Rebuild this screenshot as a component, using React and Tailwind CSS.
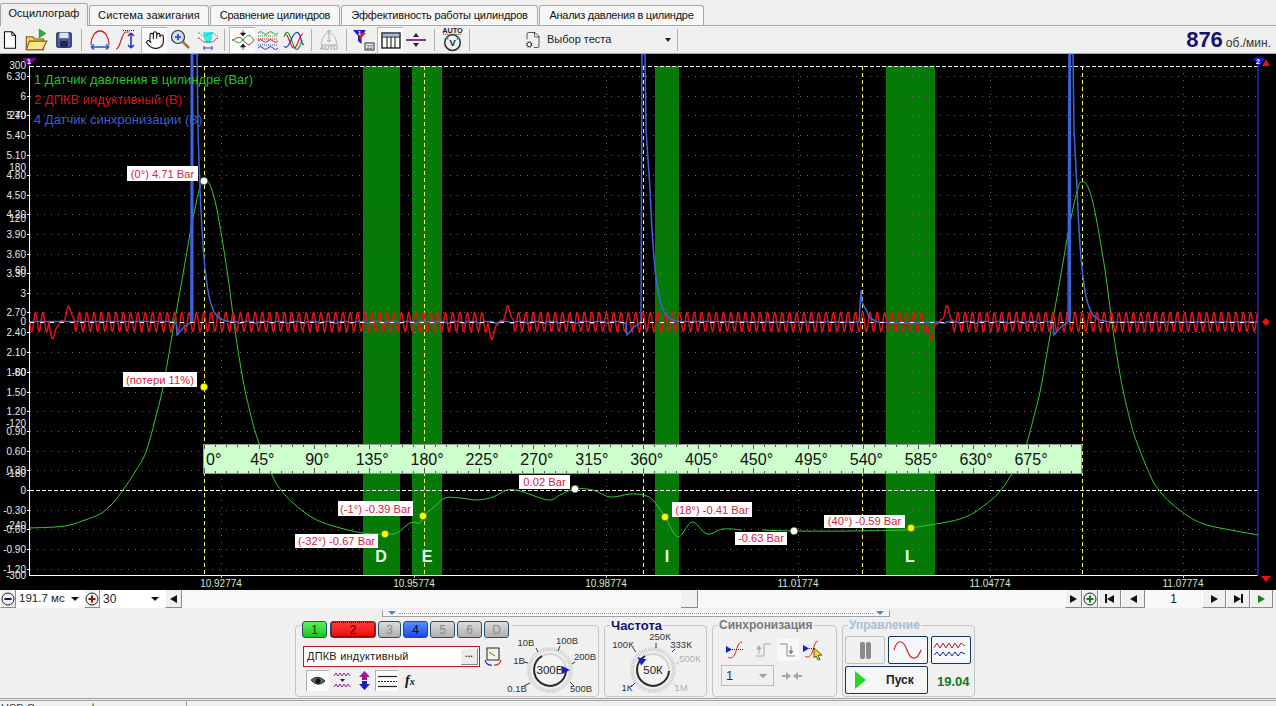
import { FileCog, Hand } from "lucide-react";

const sans = "font-['Liberation_Sans',Arial,sans-serif]";

const tabs = [
  { label: "Осциллограф", width: "w-[88px]", active: true },
  { label: "Система зажигания", width: "w-[120px]", tracking: "tracking-[0.1px]" },
  { label: "Сравнение цилиндров", width: "w-[130px]", tracking: "tracking-[-0.25px]" },
  { label: "Эффективность работы цилиндров", width: "w-[197px]", tracking: "tracking-[-0.17px]" },
  { label: "Анализ давления в цилиндре", width: "w-[165px]", tracking: "tracking-[-0.25px]" },
];

// chart data, in page pixels
const zones = [
  [363, 400],
  [412, 442],
  [655, 679],
  [886, 935],
];
const zoneLetters = [
  ["D", 381],
  ["E", 427],
  ["I", 667],
  ["L", 910],
];
const cursors = [204, 424, 643, 862, 1082];
const timeLabels = [
  ["10.92774", 221],
  ["10.95774", 414],
  ["10.98774", 606],
  ["11.01774", 798],
  ["11.04774", 990],
  ["11.07774", 1183],
];
const pressureLabels = [
  ["6.30", 76], ["6", 96], ["5.70", 115], ["5.40", 135], ["5.10", 155], ["4.80", 175],
  ["4.50", 195], ["4.20", 214], ["3.90", 234], ["3.60", 254], ["3.30", 273], ["3", 293],
  ["2.70", 312], ["2.40", 332], ["2.10", 352], ["1.80", 372], ["1.50", 392], ["1.20", 411],
  ["0.90", 431], ["0.60", 451], ["0.30", 470], ["0", 490], ["-0.30", 510], ["-0.60", 529],
  ["-0.90", 549], ["-1.20", 569],
];
const voltLabels = [
  ["300", 65], ["240", 115], ["180", 167], ["120", 218], ["60", 270], ["0", 321],
  ["-60", 372], ["-120", 423], ["-180", 473], ["-240", 525], ["-300", 575],
];
const gridRows = [76, 96, 115, 135, 155, 175, 195, 214, 234, 254, 273, 293, 312, 332, 352, 372, 392, 411, 431, 451, 470, 510, 529, 549, 569];
const gridCols = [221, 414, 606, 798, 990, 1183];

const pressure = [
  [30, 528], [55, 527], [70, 525], [85, 520], [100, 514], [113, 503], [123, 490], [135, 472], [146, 452], [155, 420],
  [163, 387], [173, 330], [182, 280], [192, 223], [200, 187], [204, 180], [210, 185], [217, 210], [227, 270],
  [235, 330], [243, 380], [252, 420], [259, 443], [273, 477], [281, 490], [293, 503], [313, 518], [333, 526],
  [363, 533], [385, 534], [397, 533], [410, 523], [420, 523], [423, 516], [433, 508], [445, 498], [460, 498],
  [477, 500], [493, 497], [507, 490], [520, 491], [548, 500], [560, 495], [575, 489], [593, 490], [610, 497],
  [630, 494], [643, 495], [653, 500], [665, 517], [678, 537], [692, 522], [707, 534], [723, 529], [742, 530],
  [762, 530], [793, 531], [850, 531], [905, 530], [911, 528], [960, 519], [985, 505], [1001, 490], [1013, 472],
  [1024, 452], [1033, 420], [1041, 387], [1051, 330], [1060, 280], [1070, 223], [1078, 188], [1082, 182],
  [1088, 187], [1095, 212], [1105, 270], [1113, 330], [1121, 380], [1130, 420], [1137, 443], [1151, 477],
  [1159, 490], [1171, 503], [1191, 518], [1211, 526], [1258, 535],
];

// catmull-rom through the points, the trace is a smooth curve in the original
const toPath = (pts) => {
  let d = `M${pts[0][0]} ${pts[0][1]}`;
  for (let i = 0; i < pts.length - 1; i++) {
    const p0 = pts[i - 1] || pts[i];
    const p1 = pts[i];
    const p2 = pts[i + 1];
    const p3 = pts[i + 2] || p2;
    const c1x = p1[0] + (p2[0] - p0[0]) / 6;
    const c1y = p1[1] + (p2[1] - p0[1]) / 6;
    const c2x = p2[0] - (p3[0] - p1[0]) / 6;
    const c2y = p2[1] - (p3[1] - p1[1]) / 6;
    d += `C${c1x.toFixed(1)} ${c1y.toFixed(1)} ${c2x.toFixed(1)} ${c2y.toFixed(1)} ${p2[0]} ${p2[1]}`;
  }
  return d;
};

const makeRed = () => {
  const pts = [];
  for (let x = 30; x <= 1258; x += 0.5) {
    let y = 322 + 9.5 * Math.sin((2 * Math.PI * (x - 30)) / 7.32);
    [53, 492, 931].forEach((b) => {
      if (x > b - 4 && x < b + 22) y = 322 + 1.5 * Math.sin(x);
      y += 16 * Math.exp(-(((x - b) / 3.5) ** 2)) - 15 * Math.exp(-(((x - b - 16) / 3.5) ** 2));
    });
    pts.push(`${x},${y.toFixed(1)}`);
  }
  return pts.join(" ");
};

const makeBlue = () => {
  const pts = [[30, 322]];
  [
    [192, 5],
    [642, 3],
    [1069, 4],
  ].forEach(([x, gap]) => {
    for (let i = pts[pts.length - 1][0] + 4; i < x - 16; i += 4) pts.push([i, 322 + (i % 16 === 0 ? 1.5 : -0.5)]);
    pts.push([x - 16, 323], [x - 15, 335], [x - 8, 327], [x - 1, 322], [x, 54], [x + gap, 54], [x + gap + 1, 130]);
    for (let t = 8; t <= 36; t += 1) pts.push([x + t, 322 - 192 * Math.exp(-(t - 6) / 5.5)]);
    if (x === 642) pts.push([760, 322], [859, 322], [861, 290], [862, 302], [870, 318], [877, 322], [900, 323], [940, 322]);
  });
  pts.push([1110, 322], [1258, 322]);
  return pts.map(([a, b]) => `${a},${b.toFixed(1)}`).join(" ");
};

const callouts = [
  { text: "(0°) 4.71 Bar", x: 127, y: 166, w: 71, h: 15, px: 204, py: 181, color: "#ffffff" },
  { text: "(потери 11%)", x: 123, y: 372, w: 74, h: 15, px: 204, py: 387, color: "#ffff00" },
  { text: "(-1°) -0.39 Bar", x: 338, y: 501, w: 75, h: 15, px: 423, py: 516, color: "#ffff00" },
  { text: "(-32°) -0.67 Bar", x: 295, y: 534, w: 83, h: 14, px: 385, py: 534, color: "#ffff00" },
  { text: "0.02 Bar", x: 519, y: 475, w: 51, h: 14, px: 575, py: 489, color: "#ffffff" },
  { text: "(18°) -0.41 Bar", x: 672, y: 502, w: 80, h: 15, px: 665, py: 517, color: "#ffff00" },
  { text: "-0.63 Bar", x: 735, y: 532, w: 52, h: 13, px: 794, py: 531, color: "#ffffff" },
  { text: "(40°) -0.59 Bar", x: 824, y: 515, w: 81, h: 13, px: 911, py: 528, color: "#ffff00" },
];

const Chart = () => {
  const degTicks = [];
  for (let i = 0; i <= 80; i++) degTicks.push(i);
  return (
    <svg viewBox="0 54 1276 536" className="block w-full h-[536px] bg-black" fontFamily="Liberation Sans, Arial, sans-serif">
      {zones.map(([a, b]) => (
        <rect key={a} x={a} y={66} width={b - a} height={509} fill="#067a06" />
      ))}
      {gridRows.map((y) => (
        <line key={y} x1={30} x2={1258} y1={y + 0.5} y2={y + 0.5} stroke="#6a6a6a" strokeDasharray="1 6" />
      ))}
      {gridCols.map((x) => (
        <line key={x} x1={x + 0.5} x2={x + 0.5} y1={66} y2={575} stroke="#6a6a6a" strokeDasharray="1 6" />
      ))}
      {cursors.map((x) => (
        <line key={x} x1={x + 0.5} x2={x + 0.5} y1={66} y2={575} stroke="#ffff66" strokeDasharray="4 3" />
      ))}
      <line x1={30} x2={1258} y1={66.5} y2={66.5} stroke="#fff" strokeDasharray="4 2" />
      <line x1={30} x2={1258} y1={490.5} y2={490.5} stroke="#fff" strokeDasharray="4 2" />

      {/* axes */}
      <line x1={29.5} x2={29.5} y1={62} y2={576} stroke="#fff" />
      <line x1={29} x2={1258} y1={575.5} y2={575.5} stroke="#fff" />
      <line x1={1258} x2={1258} y1={60} y2={576} stroke="#1a2fb0" strokeWidth={1.5} />
      {voltLabels.map(([t, y]) => (
        <text key={t} x={26} y={y + 3.5} textAnchor="end" fontSize={10} fill="#e8e8e8">{t}</text>
      ))}
      {pressureLabels.map(([t, y]) => (
        <g key={t}>
          <text x={26} y={y + 3.5} textAnchor="end" fontSize={10} fill="#e8e8e8">{t}</text>
          <line x1={27} x2={30} y1={y + 0.5} y2={y + 0.5} stroke="#fff" />
        </g>
      ))}
      {timeLabels.map(([t, x]) => (
        <g key={t}>
          <line x1={x + 0.5} x2={x + 0.5} y1={575} y2={578} stroke="#ccc" />
          <text x={x} y={587} textAnchor="middle" fontSize={10} fill="#d5e6d0">{t}</text>
        </g>
      ))}

      {/* signals */}
      <path d={toPath(pressure.filter((p) => p[0] <= 742))} fill="none" stroke="#35c935" strokeWidth={1} />
      <path d={toPath(pressure.filter((p) => p[0] >= 762))} fill="none" stroke="#35c935" strokeWidth={1} />
      <polyline points={makeRed()} fill="none" stroke="#e01414" strokeWidth={1.5} />
      <polyline points={makeBlue()} fill="none" stroke="#3c64de" strokeWidth={1.5} />
      <line x1={192} x2={192} y1={54} y2={322} stroke="#3c64de" strokeWidth={3} />
      <line x1={1070} x2={1070} y1={54} y2={322} stroke="#3c64de" strokeWidth={2} />
      <line x1={30} x2={1258} y1={322.5} y2={322.5} stroke="#fff" strokeDasharray="4 6" />

      {/* degree ruler */}
      <rect x={203.5} y={444.5} width={878} height={29} fill="#ccffcc" stroke="#999" />
      {degTicks.map((i) => {
        const x = Math.round(204 + (i * 54.9) / 5) + 0.5;
        const big = i % 5 === 0;
        return (
          <g key={i}>
            <line x1={x} x2={x} y1={445} y2={big ? 449 : 447} stroke="#555" />
            <line x1={x} x2={x} y1={big ? 468 : 471} y2={473} stroke="#555" />
          </g>
        );
      })}
      {degTicks.filter((i) => i % 5 === 0 && i < 80).map((i) => {
        const deg = i * 9;
        return i === 0 ? (
          <text key={i} x={206} y={465} fontSize={16} fill="#111">0°</text>
        ) : (
          <text key={i} x={207.5 + (i * 54.9) / 5} y={465} textAnchor="middle" fontSize={16} fill="#111">{deg}°</text>
        );
      })}

      {zoneLetters.map(([t, x]) => (
        <text key={t} x={x} y={562} textAnchor="middle" fontSize={16} fontWeight="bold" fill="#e8ffe8">{t}</text>
      ))}

      {/* callouts */}
      {callouts.map((c) => (
        <g key={c.text}>
          <rect x={c.x} y={c.y} width={c.w} height={c.h} fill="#fff" />
          <text x={c.x + c.w / 2} y={c.y + c.h - 3.5} textAnchor="middle" fontSize={11.2} fill="#d8223a">{c.text}</text>
          <circle cx={c.px} cy={c.py} r={3.7} fill={c.color} stroke="#333" strokeWidth={0.5} />
        </g>
      ))}

      {/* legend */}
      <text x={34} y={84} fontSize={13} fill="#22c322">1 Датчик давления в цилиндре (Bar)</text>
      <text x={34} y={104} fontSize={13} fill="#d81414">2 ДПКВ индуктивный (В)</text>
      <text x={34} y={124} fontSize={13} fill="#3c5fd0">4 Датчик синхронизации (В)</text>

      {/* channel markers */}
      <polygon points="22,58 37,58 29,66" fill="#6a0f8a" />
      <text x={29} y={64} textAnchor="middle" fontSize={7} fontWeight="bold" fill="#fff">1</text>
      <polygon points="1253,58 1265,58 1259,67" fill="#1515d8" />
      <text x={1258} y={64} textAnchor="middle" fontSize={7} fontWeight="bold" fill="#fff">2</text>
      <polygon points="1262,66 1270,66 1266,59" fill="#e01010" />
      <polygon points="1266,318 1270,322 1266,326 1262,322" fill="#f01010" />
      <polygon points="1261,576 1271,576 1266,582" fill="#f01010" />
    </svg>
  );
};

const Tool = ({ pressed, children }) => (
  <div className={`w-[26px] h-[26px] flex items-center justify-center ${pressed ? "bg-[#fbfbfb] border-l border-t border-[#b8b8b8]" : ""}`}>
    {children}
  </div>
);

const Sep = ({ className = "" }) => <div className={`w-px h-[22px] bg-[#b0b0b0] ${className}`} />;

const Ico = ({ children, size = 22, box = 24 }) => (
  <svg width={size} height={size} viewBox={`0 0 ${box} ${box}`} fill="none" fontFamily="Liberation Sans, Arial, sans-serif">
    {children}
  </svg>
);

const Toolbar = () => (
  <div className={`h-[28px] flex items-center border-b border-[#a8a8a8] ${sans}`}>
    <div className="-ml-[3px]" />
    <Tool>
      <Ico><path d="M6 3h8l4 4v14H6z" fill="#fff" stroke="#111" strokeWidth="1.2" /><path d="M14 3v4h4" stroke="#111" /></Ico>
    </Tool>
    <Tool>
      <Ico size={26}>
        <path d="M3 9h6l2 2h8v10H3z" fill="#f3cf5a" stroke="#7a5a10" />
        <path d="M6 13h16l-4 8H3z" fill="#fbe68c" stroke="#7a5a10" />
        <path d="M15 2l6 4-6 4z" fill="#2fae3c" stroke="#17701f" strokeWidth=".6" />
      </Ico>
    </Tool>
    <div className="w-[2px]" />
    <Tool>
      <Ico>
        <rect x="4" y="4" width="16" height="16" rx="1" fill="#4a5a92" stroke="#1d2450" />
        <rect x="7" y="4" width="10" height="6" fill="#dfe3ee" />
        <rect x="8" y="13" width="8" height="7" fill="#20284f" />
      </Ico>
    </Tool>
    <Sep className="ml-[4px] mr-[5px]" />
    <Tool>
      <Ico size={24}>
        <path d="M3 17C3 9 7 3 12 3s9 6 9 14" stroke="#d81c1c" strokeWidth="1.3" />
        <path d="M3 19h18M3 19l3-2.500M3 19l3 2.500M21 19l-3-2.500M21 19l-3 2.500" stroke="#1c56d8" strokeWidth="1.600" />
      </Ico>
    </Tool>
    <Tool>
      <Ico size={24}>
        <path d="M2 21c5 0 5-17 10-17h3" stroke="#d81c1c" strokeWidth="1.200" />
        <path d="M9 2.500h12" stroke="#111" strokeDasharray="1 1" />
        <path d="M17 5v15M17 5l-3 3M17 5l3 3M17 20l-3-3M17 20l3-3" stroke="#1c3cc8" strokeWidth="1.600" />
      </Ico>
    </Tool>
    <div className="w-[2px]" />
    <Tool pressed>
      <Hand size={20} strokeWidth={1.3} color="#111" fill="#fff" />
    </Tool>
    <Tool>
      <Ico size={24}>
        <circle cx="10" cy="9" r="6.500" fill="#cfe2f5" stroke="#333" strokeWidth="1.200" />
        <path d="M7 9h6M10 6v6" stroke="#1c3cc8" strokeWidth="1.600" />
        <path d="M15 14l6 6" stroke="#9a7a3a" strokeWidth="2.600" />
      </Ico>
    </Tool>
    <div className="w-[2px]" />
    <Tool>
      <Ico size={24}>
        <path d="M7 4h10l-2 11H9z" fill="#3fe8e8" />
        <path d="M2 5c3 0 3 3 6 3s5-3 8-3 3 3 6 3" stroke="#1fae4a" strokeWidth=".9" strokeDasharray="2 1" />
        <path d="M2 10c3 0 4 4 6 4s5 0 8 0 3-4 6-4" stroke="#d81c1c" strokeWidth="1" strokeDasharray="2 1" />
        <path d="M8 20h8M8 18v4M16 18v4" stroke="#1c3cc8" />
      </Ico>
    </Tool>
    <Sep className="ml-[3px] mr-[4px]" />
    <Tool pressed>
      <Ico size={24}>
        <path d="M1 12c4 0 6 6 11 0s7-6 11 0" stroke="#1fa03a" strokeWidth="1" />
        <path d="M1 12c4 0 6-6 11 0s7 6 11 0" stroke="#d81c1c" strokeWidth="1" />
        <path d="M12 2v3M9.500 5h5l-2.500 3zM9.500 19h5l-2.500-3zM12 19v3" fill="#111" stroke="#111" strokeWidth=".6" />
      </Ico>
    </Tool>
    <Tool>
      <Ico size={24}>
        <path d="M2 5q2.500-3 5 0t5 0 5 0 5 0" stroke="#1fa03a" /><path d="M2 8h20" stroke="#1fa03a" strokeDasharray="1 1" />
        <path d="M2 13q2.500-3 5 0t5 0 5 0 5 0" stroke="#d81c1c" /><path d="M2 11h20" stroke="#d81c1c" strokeDasharray="1 1" />
        <path d="M2 20q2.500-3 5 0t5 0 5 0 5 0" stroke="#1c3cc8" /><path d="M2 17h20" stroke="#1c3cc8" strokeDasharray="1 1" />
      </Ico>
    </Tool>
    <Tool>
      <Ico size={24}>
        <path d="M2 9c3-10 6-2 9 7s6 6 9-4" stroke="#1fa03a" strokeWidth="1.200" />
        <path d="M2 18c3 4 5-2 8-8s6-8 8-2 2 10 4 8" stroke="#1c3cc8" strokeWidth="1.200" />
        <path d="M3 6c4 0 5 14 9 14s5-14 9-14" stroke="#d81c1c" strokeWidth="1.200" />
      </Ico>
    </Tool>
    <Sep className="ml-[4px] mr-[4px]" />
    <Tool>
      <Ico size={24}>
        <path d="M4 17C5 9 8 5 12 5s7 4 8 12z" stroke="#bbb" strokeWidth="1" />
        <path d="M12 2v12M12 2l-2 2M12 2l2 2M12 14l-2-2M12 14l2-2" stroke="#aaa" strokeWidth="1" />
        <text x="12" y="22" textAnchor="middle" fontSize="6.500" fontWeight="bold" fill="#aaa">AUTO</text>
      </Ico>
    </Tool>
    <Sep className="ml-[4px] mr-[4px]" />
    <Tool>
      <Ico size={24}>
        <path d="M1 2h13L9.500 8v8L6 13V8z" fill="#1c1cc8" />
        <path d="M6 5h8L9.500 9.500V14z" fill="#e01c1c" />
        <text x="7.500" y="7" textAnchor="middle" fontSize="6" fontWeight="bold" fill="#fff">1</text>
        <rect x="13" y="15" width="9" height="7" fill="#dfe8ff" stroke="#333" />
        <text x="17.500" y="21" textAnchor="middle" fontSize="5.500" fill="#333">22</text>
      </Ico>
    </Tool>
    <Tool pressed>
      <Ico size={24}>
        <rect x="3" y="5" width="18" height="15" stroke="#111" strokeWidth="1.300" />
        <path d="M3 9h18M8 9v11M12 9v11M16 9v11" stroke="#111" />
        <path d="M4 7h16" stroke="#4a70d0" />
      </Ico>
    </Tool>
    <Tool>
      <Ico size={24}>
        <path d="M2 12h20" stroke="#7a1a9a" strokeWidth="1.800" />
        <path d="M9 9h6l-3-4zM9 15h6l-3 4z" fill="#222" />
      </Ico>
    </Tool>
    <Sep className="ml-[5px] mr-[4px]" />
    <Tool>
      <Ico size={25}>
        <text x="12" y="6" textAnchor="middle" fontSize="7" fontWeight="bold" fill="#222">AUTO</text>
        <path d="M3 7h18" stroke="#222" strokeDasharray="1 1" />
        <circle cx="12" cy="15" r="7.500" stroke="#333" strokeWidth="1.500" fill="#e8f4f4" />
        <path d="M6 10l2 2M18 10l-2 2" stroke="#2aa" strokeWidth="1.500" />
        <text x="12" y="18.500" textAnchor="middle" fontSize="9" fontWeight="bold" fill="#222">V</text>
      </Ico>
    </Tool>
    <Sep className="ml-[4px] mr-[54px]" />
    <FileCog size={18} strokeWidth={1} color="#222" />
    <span className="ml-[5px] w-[118px] text-[11px] leading-none text-[#222]">Выбор теста</span>
    <span className="w-0 h-0 border-x-[3px] border-x-transparent border-t-[4px] border-t-[#222]" />
    <Sep className="ml-[6px]" />
    <div className="ml-auto mr-[5px] flex items-baseline">
      <span className="text-[22px] leading-none font-bold text-[#14146e]">876</span>
      <span className="ml-[3px] text-[12px] leading-none text-[#333]">об./мин.</span>
    </div>
  </div>
);

const SmallBtn = ({ width = "w-[17px]", children }) => (
  <div className={`${width} h-[18px] flex items-center justify-center bg-[#f0f0f0] border-r border-b border-[#8a8a8a] border-l border-l-white`}>
    {children}
  </div>
);

const Tri = ({ dir = "right", color = "#111" }) => (
  <span className={`w-0 h-0 border-y-[4px] border-y-transparent ${dir === "right" ? "border-l-[7px]" : "border-r-[7px]"}`} style={{ [dir === "right" ? "borderLeftColor" : "borderRightColor"]: color }} />
);

const Bar = () => <span className="w-[2px] h-[9px] bg-[#111]" />;

const RoundBtn = ({ color, minus, width = "w-[16px]" }) => (
  <SmallBtn width={width}>
    <svg width="14" height="14" viewBox="0 0 14 14">
      <circle cx="7" cy="7" r="6" fill="none" stroke="#222" />
      <path d={minus ? "M3.500 7h7" : "M3.500 7h7M7 3.500v7"} stroke={color} strokeWidth="2" />
    </svg>
  </SmallBtn>
);

const DownArrow = ({ className = "" }) => (
  <span className={`w-0 h-0 border-x-[4px] border-x-transparent border-t-[4px] border-t-[#111] ${className}`} />
);

const ScrollRow = () => (
  <div className={`h-[18px] flex items-center text-[#222] ${sans}`}>
    <RoundBtn color="#14146e" minus />
    <div className="w-[68px] h-full flex items-center bg-white pl-[3px] text-[12px] leading-none">
      <span className="flex-1 text-[11.5px]">191.7 мс</span>
      <DownArrow className="mr-[5px]" />
    </div>
    <RoundBtn color="#8a1010" />
    <div className="w-[65px] h-full flex items-center bg-white pl-[3px] text-[12px] leading-none">
      <span className="flex-1">30</span>
      <DownArrow className="mr-[6px]" />
    </div>
    <SmallBtn><Tri dir="left" /></SmallBtn>
    <div className="relative flex-1 h-full bg-[#f8f8f8]">
      <div className="absolute left-[499px] top-0 w-[17px] h-[18px] bg-[#f0f0f0] border-r border-b border-[#8a8a8a]" />
    </div>
    <SmallBtn><Tri /></SmallBtn>
    <RoundBtn color="#14801c" />
    <SmallBtn width="w-[23px]"><Bar /><Tri dir="left" /></SmallBtn>
    <SmallBtn width="w-[24px]"><Tri dir="left" /></SmallBtn>
    <div className="w-[57px] h-full flex items-center justify-center bg-[#f8f8f8] text-[12px]">1</div>
    <SmallBtn width="w-[24px]"><Tri /></SmallBtn>
    <SmallBtn width="w-[24px]"><Tri /><Bar /></SmallBtn>
    <SmallBtn width="w-[23px]"><Tri color="#14801c" /></SmallBtn>
    <div className="w-[3px]" />
  </div>
);

const ChanBtn = ({ label, width = "w-[25px]", tone }) => {
  const tones = {
    green: "from-[#5cf05c] to-[#12c412] text-[#0a3a0a]",
    red: "from-[#ff3a3a] to-[#e80000] text-[#400000]",
    blue: "from-[#5a8cff] to-[#1a4ae8] text-[#08082a]",
    off: "from-[#dcdcdc] to-[#b0b0b0] text-[#8a8a8a]",
  };
  return (
    <div className={`${width} h-[17px] rounded-[3px] border border-[#24506e] bg-linear-to-b ${tones[tone]} flex items-center justify-center text-[12px] leading-none`}>
      {label}
    </div>
  );
};

const Knob = ({ cx, cy, width, height, center, pointer, labels }) => {
  const ticks = [];
  for (let a = 0; a < 360; a += 6) ticks.push(a);
  const px = cx + 16 * Math.cos(pointer);
  const py = cy + 16 * Math.sin(pointer);
  return (
    <svg width={width} height={height} className="block overflow-visible" fontFamily="Liberation Sans, Arial, sans-serif">
      {ticks.map((a) => {
        const r = (a * Math.PI) / 180;
        return (
          <line key={a} x1={cx + 19 * Math.cos(r)} y1={cy + 19 * Math.sin(r)} x2={cx + 23 * Math.cos(r)} y2={cy + 23 * Math.sin(r)} stroke="#c4c4c4" />
        );
      })}
      <circle cx={cx} cy={cy} r={16} fill="#f4f4f4" stroke="#d4d4d4" strokeWidth={2} />
      <path d={`M${cx + 16} ${cy + 1}A16 16 0 1 1 ${cx - 8} ${cy - 14}`} fill="none" stroke="#2a2a2a" strokeWidth={2} />
      <polygon points={`${px - 4},${py - 4} ${px + 4},${py} ${px - 4},${py + 4}`} fill="#1420c0" transform={`rotate(${(pointer * 180) / Math.PI} ${px} ${py})`} />
      {labels.map(([t, x, y, muted, x2, y2, x3, y3]) => (
        <g key={t}>
          <line x1={x2} y1={y2} x2={x3} y2={y3} stroke={muted ? "#bbb" : "#333"} />
          <text x={x} y={y} textAnchor="middle" fontSize={9.5} fill={muted ? "#b0b0b0" : "#333"}>{t}</text>
        </g>
      ))}
      <text x={cx} y={cy + 4} textAnchor="middle" fontSize={11.5} fill="#222">{center}</text>
    </svg>
  );
};

const GroupBox = ({ title, titleClass, width, children }) => (
  <div className={`relative ${width} h-[72px] mt-[17px] rounded-[4px] border border-[#c6c6c6]`}>
    {title && <span className={`absolute left-[5px] -top-[8px] px-[1px] bg-[#f0f0f0] leading-[15px] font-bold ${titleClass}`}>{title}</span>}
    {children}
  </div>
);

const ControlPanel = () => (
  <div className={`relative h-[90px] flex pl-[295px] gap-[5px] ${sans}`}>
    {/* splitter handle */}
    <div className="absolute left-[382px] top-[2px] w-[508px] h-[7px] border-b border-x border-[#a0a0a0] flex items-center justify-between px-[5px] bg-[#f8f8f8]">
      <span className="w-0 h-0 border-x-[4px] border-x-transparent border-t-[4px] border-t-[#4a8ad0]" />
      <span className="flex-1 mx-[3px] border-t border-dotted border-[#6a9ad0]" />
      <span className="w-0 h-0 border-x-[4px] border-x-transparent border-t-[4px] border-t-[#4a8ad0]" />
    </div>

    <GroupBox width="w-[304px]">
      <div className="absolute left-0 top-0 w-[304px] h-[72px] flex">
        <div className="w-[214px] pl-[6px] -mt-[5px]">
          <div className="flex gap-[2px] bg-[#f0f0f0] pr-[3px] w-fit">
            <ChanBtn label="1" tone="green" />
            <div className="w-[46px] h-[17px] ml-px rounded-[3px] border border-[#24506e] bg-linear-to-b from-[#ff3a3a] to-[#e80000] flex items-center justify-center text-[12px] leading-none text-[#400000] outline-1 outline-dotted -outline-offset-2 outline-[#300]">2</div>
            <ChanBtn label="3" width="w-[23px]" tone="off" />
            <ChanBtn label="4" tone="blue" />
            <ChanBtn label="5" tone="off" />
            <ChanBtn label="6" tone="off" />
            <ChanBtn label="D" tone="off" />
          </div>
          <div className="flex items-center mt-[8px]">
            <div className="w-[177px] h-[21px] ml-[1px] flex items-center justify-between border border-[#b02020] bg-white pl-[3px] pr-[1px] text-[11px] tracking-[0.2px] text-[#222]">
              <span>ДПКВ индуктивный</span>
              <span className="w-[17px] h-[16px] flex items-center justify-center bg-[#ececec] border-r border-b border-[#888] text-[9px] leading-none font-bold pb-[3px]">...</span>
            </div>
            <svg width="20" height="20" viewBox="0 0 20 20" className="ml-[3px]" fill="none">
              <rect x="4" y="1" width="12" height="12" fill="#f4f4e8" stroke="#222" />
              <path d="M6 5l6 4" stroke="#2a8a2a" />
              <path d="M2 13a6 6 0 0 0 7 5" stroke="#1420c0" strokeWidth="1.200" />
              <path d="M18 13a6 6 0 0 1-7 5" stroke="#d81c1c" strokeWidth="1.200" />
            </svg>
          </div>
          <div className="flex items-center mt-[3px] ml-[4px]">
            <div className="w-[23px] h-[21px] flex items-center justify-center bg-[#fbfbfb] border-l border-t border-[#b0b0b0]">
              <svg width="16" height="10" viewBox="0 0 16 10"><path d="M1 4q7-6 14 1-7 7-14-1z" fill="#666" stroke="#222" /><circle cx="8" cy="5" r="2.500" fill="#111" /></svg>
            </div>
            <div className="w-[24px] flex justify-center ml-[1px]">
              <svg width="19" height="19" viewBox="0 0 19 19" fill="none">
                <path d="M1 5l2-3 2 3 2-3 2 3 2-3 2 3 2-3 2 3" stroke="#9a1a9a" />
                <path d="M7 8h5l-2.500 3z" fill="#222" />
                <path d="M1 16l2-3 2 3 2-3 2 3 2-3 2 3 2-3 2 3" stroke="#9a1a9a" />
              </svg>
            </div>
            <div className="w-[21px] flex justify-center">
              <svg width="15" height="19" viewBox="0 0 15 19">
                <path d="M7.500 0L13 6H10v3H5V6H2z" fill="#9a1a9a" />
                <path d="M7.500 19L13 13H10V10H5v3H2z" fill="#1420c0" />
              </svg>
            </div>
            <div className="w-[23px] h-[21px] flex items-center justify-center bg-[#fbfbfb] border-l border-t border-[#b0b0b0]">
              <svg width="19" height="13" viewBox="0 0 19 13" fill="none" stroke="#222"><path d="M0 1.500h19" strokeWidth="1.200" /><path d="M0 6.500h19" strokeDasharray="2 1" /><path d="M0 11.500h19" strokeWidth="1.200" /></svg>
            </div>
            <span className="ml-[7px] font-['Liberation_Serif',serif] italic font-bold text-[14px] leading-none text-[#111]">f<span className="text-[10px]">x</span></span>
          </div>
        </div>
        <Knob
          cx={40}
          cy={44}
          width={88}
          height={72}
          center="300В"
          pointer={0}
          labels={[
            ["10В", 16, 20, false, 26, 22, 28, 26],
            ["100В", 57, 18, false, 50, 20, 48, 25],
            ["1В", 9, 38, false, 14, 36, 18, 37],
            ["200В", 75, 34, false, 65, 36, 62, 38],
            ["0.1В", 7, 66, false, 14, 60, 20, 57],
            ["500В", 71, 66, false, 64, 60, 60, 56],
          ]}
        />
      </div>
    </GroupBox>

    <GroupBox width="w-[103px]" title="Частота" titleClass="text-[#14146e] text-[13px]">
      <div className="absolute left-0 top-0">
        <Knob
          cx={48}
          cy={44}
          width={101}
          height={70}
          center="50К"
          pointer={-2.45}
          labels={[
            ["250К", 55, 14, false, 51, 17, 51, 22],
            ["100К", 18, 22, false, 28, 22, 31, 26],
            ["333К", 76, 22, false, 70, 23, 67, 26],
            ["500К", 85, 36, true, 74, 36, 71, 38],
            ["1К", 22, 65, false, 26, 61, 30, 57],
            ["1М", 76, 65, true, 72, 61, 68, 57],
          ]}
        />
      </div>
    </GroupBox>

    <GroupBox width="w-[125px]" title="Синхронизация" titleClass="text-[#7a7a7a] text-[12px]">
      <div className="flex pl-[8px] pt-[12px] h-[36px] items-center">
        <div className="w-[28px] flex justify-center">
          <svg width="20" height="20" viewBox="0 0 20 20" fill="none"><path d="M3 17c2 2 5 1 7-3s2-11 7-12" stroke="#d81c1c" /><path d="M1 6l6 3.500-6 3.500z" fill="#1420c0" /><path d="M7 9.500h11" stroke="#1420c0" strokeDasharray="1 1" /></svg>
        </div>
        <div className="w-[28px] flex justify-center">
          <svg width="18" height="18" viewBox="0 0 18 18" fill="none" stroke="#a8a8a8"><path d="M2 15h8V3h7" /><path d="M5 13V5M5 5L3 8h4z" fill="#a8a8a8" /></svg>
        </div>
        <div className="w-[22px] h-[22px] flex justify-center items-center bg-[#f8f8f8]">
          <svg width="18" height="18" viewBox="0 0 18 18" fill="none" stroke="#8a8a8a"><path d="M1 3h7v12h8" /><path d="M12 5v8M12 13l-2-3h4z" fill="#8a8a8a" /></svg>
        </div>
        <div className="w-[28px] flex justify-center">
          <svg width="22" height="22" viewBox="0 0 22 22" fill="none">
            <path d="M3 17c2 2 5 1 7-3s2-11 6-12" stroke="#d81c1c" />
            <path d="M1 6l6 3.500-6 3.500z" fill="#1420c0" />
            <path d="M7 9.500h5" stroke="#1420c0" strokeDasharray="1 1" />
            <path d="M12 9l8 7-4 .500 2 4-2 .500-2-4-2 2z" fill="#ffd820" stroke="#222" strokeWidth=".7" />
          </svg>
        </div>
      </div>
      <div className="flex items-center pl-[8px] mt-[3px]">
        <div className="w-[53px] h-[21px] flex items-center justify-between border border-[#bcbcbc] pl-[4px] pr-[6px] text-[13px] text-[#333]">
          <span>1</span>
          <span className="w-0 h-0 border-x-[4px] border-x-transparent border-t-[4px] border-t-[#999]" />
        </div>
        <svg width="20" height="10" viewBox="0 0 20 10" className="ml-[8px]"><path d="M0 4h4V1l5 4-5 4V6H0zM20 4h-4V1l-5 4 5 4V6h4z" fill="#a8a8a8" /></svg>
      </div>
    </GroupBox>

    <GroupBox width="w-[133px]" title="Управление" titleClass="text-[#a9bdd4] text-[12px]">
      <div className="flex gap-[3px] pl-[2px] pt-[10px]">
        <div className="w-[40px] h-[28px] flex items-center justify-center gap-[1px] border border-[#c0c0c0] rounded-[2px]">
          <span className="w-[5px] h-[17px] bg-[#8a8a8a] rounded-[2px]" />
          <span className="w-[5px] h-[17px] bg-[#8a8a8a] rounded-[2px]" />
        </div>
        <div className="w-[40px] h-[28px] flex items-center justify-center border border-[#14365a] rounded-[2px] bg-[#f4f8fc]">
          <svg width="30" height="20" viewBox="0 0 30 20" fill="none"><path d="M1 10c3-11 9-11 13 0s10 11 14 0" stroke="#d81c1c" strokeWidth="1.200" /></svg>
        </div>
        <div className="w-[40px] h-[28px] flex items-center justify-center border border-[#14365a] rounded-[2px] bg-[#f4f8fc]">
          <svg width="36" height="20" viewBox="0 0 36 20" fill="none">
            <path d="M1 8l3-5 3 5 3-5 3 5 3-5 3 5 3-5 3 5 3-5 4 3" stroke="#c01c1c" />
            <path d="M1 15l3-3 3 4 3-4 3 4 3-4 3 4 3-4 3 4 3-4 4 2" stroke="#1420a0" />
          </svg>
        </div>
      </div>
      <div className="flex items-center pl-[2px] mt-[2px]">
        <div className="w-[83px] h-[28px] flex items-center border border-[#14365a] rounded-[2px] bg-[#f6f6f6]">
          <span className="ml-[9px] w-0 h-0 border-y-[9px] border-y-transparent border-l-[11px] border-l-[#22d822]" />
          <span className="ml-[20px] text-[12px] font-bold text-[#222]">Пуск</span>
        </div>
        <span className="ml-[9px] mt-[4px] text-[13px] font-bold text-[#0f7a1c]">19.04</span>
      </div>
    </GroupBox>
  </div>
);

const StatusBar = () => (
  <div className={`relative h-[8px] overflow-hidden border-t border-[#a0a0a0] ${sans}`}>
    <div className="mt-[1px] border-t border-[#a0a0a0] h-full flex">
      <span className="w-[187px] border-r border-[#a0a0a0] pl-[1px] pt-[1px] text-[11px] leading-[13px] text-[#333]">USB Осциллограф</span>
    </div>
  </div>
);

export default function App() {
  return (
    <div className={`w-[1276px] h-[706px] overflow-hidden bg-[#f0f0f0] ${sans}`}>
      {/* tabs */}
      <div className="h-[26px] flex items-end gap-[1px] border-b border-[#a8a8a8]">
        {tabs.map((t) => (
          <div
            key={t.label}
            className={`${t.width} ${t.tracking || ""} flex items-center justify-center rounded-t-[3px] border border-b-0 border-[#a8a8a8] text-[11px] leading-none text-[#111] ${t.active ? "h-[23px] -mb-px bg-[#f0f0f0] pb-[3px]" : "h-[20px] bg-[#f6f6f6]"}`}
          >
            {t.label}
          </div>
        ))}
      </div>
      <Toolbar />
      <Chart />
      <ScrollRow />
      <ControlPanel />
      <StatusBar />
    </div>
  );
}
